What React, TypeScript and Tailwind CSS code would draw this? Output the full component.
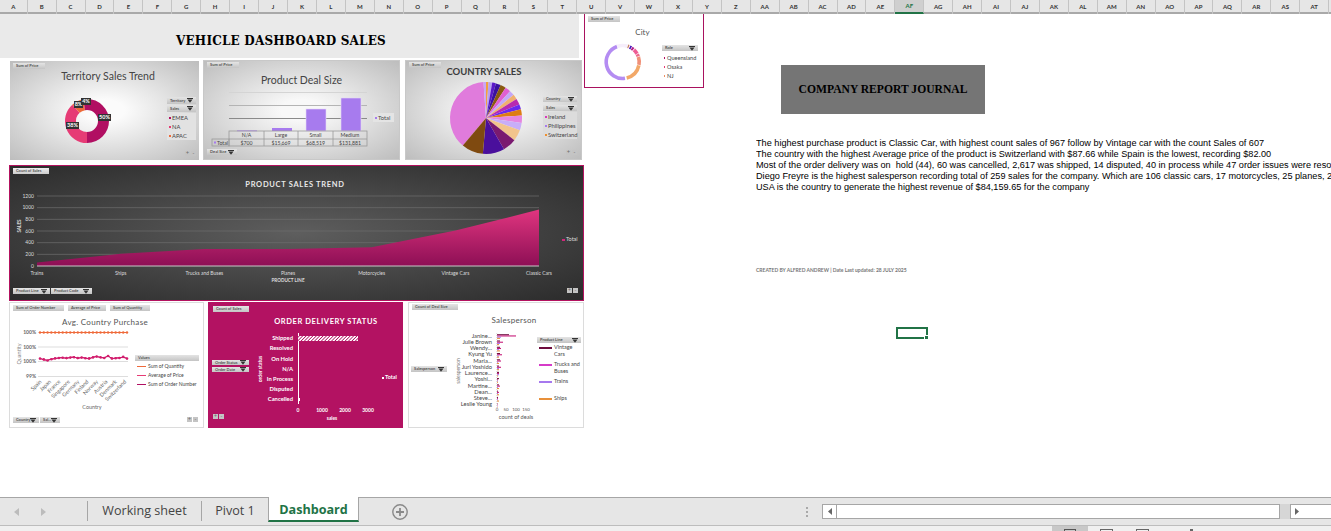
import React from "react";

const columns = [..."ABCDEFGHIJKLMNOPQRSTUVWXYZ", ..."ABCDEFGHIJKLMNOPQRST".split("").map((c) => "A" + c)];

function polar(cx: number, cy: number, r: number, deg: number) {
  const a = ((deg - 90) * Math.PI) / 180;
  return [cx + r * Math.cos(a), cy + r * Math.sin(a)];
}
function wedge(cx: number, cy: number, r: number, from: number, to: number) {
  const [x1, y1] = polar(cx, cy, r, from);
  const [x2, y2] = polar(cx, cy, r, to);
  return `M${cx} ${cy}L${x1} ${y1}A${r} ${r} 0 ${to - from > 180 ? 1 : 0} 1 ${x2} ${y2}Z`;
}
function arc(cx: number, cy: number, r: number, from: number, to: number) {
  const [x1, y1] = polar(cx, cy, r, from);
  const [x2, y2] = polar(cx, cy, r, to);
  return `M${x1} ${y1}A${r} ${r} 0 ${to - from > 180 ? 1 : 0} 1 ${x2} ${y2}`;
}

function Arrow() {
  return (
    <svg width="6" height="5" viewBox="0 0 6 5" className="shrink-0">
      <rect x="0" y="0" width="6" height="1" fill="#333" />
      <path d="M0.5 1.5H5.5L3 4.8Z" fill="#333" />
    </svg>
  );
}

function Field({ label, className, arrow }: { label: string; className: string; arrow?: boolean }) {
  return (
    <div
      className={`flex items-center justify-between overflow-hidden whitespace-nowrap bg-gradient-to-b from-[#e4e4e4] to-[#c4c4c4] px-[3px] text-[4px] font-bold leading-none text-[#555] ${className}`}
    >
      <span>{label}</span>
      {arrow && <Arrow />}
    </div>
  );
}

function PlusMinus({ className = "" }: { className?: string }) {
  return (
    <div className={`flex gap-[1px] ${className}`}>
      <div className="flex h-[5px] w-[5px] items-center justify-center bg-[#c4c4c4] text-[5px] leading-none text-[#666]">+</div>
      <div className="flex h-[5px] w-[5px] items-center justify-center bg-[#c4c4c4] text-[5px] leading-none text-[#666]">-</div>
    </div>
  );
}

function LegendRow({ color, label }: { color: string; label: string }) {
  return (
    <div className="flex h-[9px] items-center gap-[1px] whitespace-nowrap text-[5.8px] leading-none text-[#444]">
      <span className={`h-[2px] w-[2px] shrink-0 ${color}`} />
      <span>{label}</span>
    </div>
  );
}

function ColumnHeader() {
  return (
    <div className="flex h-[14px] shrink-0 border-b-2 border-[#a9a9a9] bg-[#e6e6e6]">
      {columns.map((c, i) => (
        <div
          key={c}
          className={`flex h-[14px] shrink-0 items-center justify-center border-r border-[#c4c4c4] text-[6px] font-bold leading-none ${
            i === 0 ? "w-[27.7px]" : "w-[28.93px]"
          } ${c === "AF" ? "border-b-2 border-b-[#217346] bg-[#cfcfcf] text-[#217346]" : "text-[#333]"}`}
        >
          {c}
        </div>
      ))}
    </div>
  );
}

function TerritoryCard() {
  return (
    <div className="flex h-[99px] w-[189px] flex-col self-end bg-[radial-gradient(ellipse_at_center,#fbfbfb_15%,#bdbdbd_100%)]">
      <Field label="Sum of Price" className="ml-[3px] mt-[2px] h-[6px] w-[32px] shrink-0" />
      <div className="flex h-[14px] shrink-0 items-center justify-center pl-[7px] text-[10.5px] leading-none text-[#444]">
        Territory Sales Trend
      </div>
      <div className="flex flex-1">
        <svg width="150" height="77" viewBox="10 83 150 77" className="shrink-0">
          <path d={arc(87, 121, 16.5, 0, 180)} fill="none" stroke="#b10f62" strokeWidth="11" />
          <path d={arc(87, 121, 16.5, 180, 318)} fill="none" stroke="#e63b75" strokeWidth="11" />
          <path d={arc(87, 121, 16.5, 318, 350)} fill="none" stroke="#ee6a3a" strokeWidth="11" />
          <path d={arc(87, 121, 16.5, 350, 360)} fill="none" stroke="#b10f62" strokeWidth="11" />
          {[
            [74, 101, "8%", 9],
            [81, 98, "4%", 10],
            [98, 114, "50%", 13],
            [66, 122, "38%", 13],
          ].map(([x, y, t, w]) => (
            <g key={String(t)}>
              <rect x={x as number} y={y as number} width={w as number} height="7" fill="#333" />
              <text x={(x as number) + (w as number) / 2} y={(y as number) + 5.3} fontSize="5.5" fontWeight="700" fill="#fff" textAnchor="middle">
                {t}
              </text>
            </g>
          ))}
        </svg>
        <div className="ml-[7px] mt-[14px] flex w-[29px] flex-col gap-[1px] pb-[4px]">
          <Field label="Territory" className="h-[7px] w-full" arrow />
          <Field label="Sales" className="h-[7px] w-full" arrow />
          <div className="bg-[#e2e2e2] px-[2px]">
            <LegendRow color="bg-[#b10f62]" label="EMEA" />
            <LegendRow color="bg-[#e63b75]" label="NA" />
            <LegendRow color="bg-[#ee6a3a]" label="APAC" />
          </div>
          <PlusMinus className="mt-auto justify-end" />
        </div>
      </div>
    </div>
  );
}

function DealCard() {
  const cols = [229, 264, 298, 333, 367];
  const cells = [
    ["N/A", "$700"],
    ["Large", "$15,669"],
    ["Small", "$68,519"],
    ["Medium", "$131,881"],
  ];
  return (
    <div className="flex h-[100px] w-[197px] flex-col border border-[#c8c8c8] bg-[radial-gradient(ellipse_at_center,#f8f8f8_15%,#bdbdbd_100%)]">
      <Field label="Sum of Price" className="ml-[3px] mt-[1px] h-[6px] w-[32px] shrink-0" />
      <div className="mt-[6px] flex h-[12px] shrink-0 items-center justify-center text-[10.5px] leading-none text-[#444]">
        Product Deal Size
      </div>
      <div className="flex h-[62px] shrink-0">
        <svg width="164" height="62" viewBox="208 86 164 62" className="ml-[4px] shrink-0">
          <line x1="229" x2="367" y1="92.5" y2="92.5" stroke="#d4d4d4" />
          <line x1="229" x2="367" y1="105.5" y2="105.5" stroke="#b4b4b4" />
          <line x1="229" x2="367" y1="118.5" y2="118.5" stroke="#8a8a8a" />
          <rect x="237" y="130.4" width="20" height="0.8" fill="#a77bee" />
          <rect x="272" y="128" width="20" height="3" fill="#a77bee" />
          <rect x="306" y="109" width="20" height="22" fill="#a77bee" stroke="#e3d8f7" strokeWidth="0.6" />
          <rect x="341" y="98" width="20" height="33" fill="#a77bee" stroke="#e3d8f7" strokeWidth="0.6" />
          <g fill="none" stroke="#9a9a9a" strokeWidth="0.8">
            <rect x="229" y="131" width="138" height="15" />
            <rect x="212" y="139" width="17" height="7" />
            <line x1="229" x2="367" y1="139" y2="139" />
            {cols.slice(1, 4).map((x) => (
              <line key={x} x1={x} x2={x} y1="131" y2="146" />
            ))}
          </g>
          <rect x="214" y="141.5" width="2" height="2" fill="#a77bee" />
          <text x="217" y="144.5" fontSize="5.2" fill="#444">Total</text>
          {cells.map(([a, b], i) => (
            <g key={a} fontSize="5.2" fill="#444" textAnchor="middle">
              <text x={(cols[i] + cols[i + 1]) / 2} y="137">{a}</text>
              <text x={(cols[i] + cols[i + 1]) / 2} y="144.5">{b}</text>
            </g>
          ))}
        </svg>
        <div className="ml-[1px] mt-[27px] h-[9px] w-[21px] bg-[#e4e4e4] px-[2px]">
          <LegendRow color="bg-[#a77bee]" label="Total" />
        </div>
      </div>
      <Field label="Deal Size" className="ml-[3px] mt-[1px] h-[6px] w-[30px] shrink-0" arrow />
    </div>
  );
}

function CountryCard() {
  const slices: [number, number, string][] = [
    [220, 356, "#e07bdc"],
    [356, 360, "#c9a7f5"],
    [0, 4, "#f0a040"],
    [4, 10, "#b9a0f0"],
    [10, 16, "#5a18c8"],
    [16, 24, "#3b10a0"],
    [24, 33, "#8a5a10"],
    [33, 42, "#e060d0"],
    [42, 50, "#c4a8f7"],
    [50, 58, "#f0b070"],
    [58, 68, "#b82ab0"],
    [68, 76, "#6a28ee"],
    [76, 86, "#de7c14"],
    [86, 98, "#e585e0"],
    [98, 110, "#c8aef8"],
    [110, 128, "#f2c48c"],
    [128, 150, "#7a1a70"],
    [150, 185, "#4a0f9c"],
    [185, 220, "#7f4a10"],
  ];
  return (
    <div className="flex h-[100px] w-[177px] flex-col border border-[#c8c8c8] bg-[radial-gradient(ellipse_at_center,#f8f8f8_15%,#bdbdbd_100%)]">
      <Field label="Sum of Price" className="ml-[3px] mt-[1px] h-[6px] w-[32px] shrink-0" />
      <div className="-mt-[2px] flex h-[11px] shrink-0 items-center justify-center pr-[19px] text-[9.5px] font-bold leading-none text-[#3c3c3c]">
        COUNTRY SALES
      </div>
      <div className="mt-[1px] flex flex-1">
        <svg width="135" height="79" viewBox="406 78 135 79" className="shrink-0">
          {slices.map(([a, b, c]) => (
            <path key={a} d={wedge(486, 118, 36, a, b)} fill={c} />
          ))}
        </svg>
        <div className="ml-[2px] mt-[18px] flex w-[34px] flex-col gap-[1px] pb-[4px]">
          <Field label="Country" className="h-[6px] w-full" arrow />
          <div className="h-[1px]" />
          <Field label="Sales" className="h-[6px] w-full" arrow />
          <div className="bg-[#dcdcdc] px-[2px]">
            <LegendRow color="bg-[#d838c0]" label="Ireland" />
            <LegendRow color="bg-[#a77bee]" label="Philippines" />
            <LegendRow color="bg-[#ee8f30]" label="Switzerland" />
          </div>
          <PlusMinus className="mt-auto justify-end" />
        </div>
      </div>
    </div>
  );
}

function CityCard() {
  const segs: [number, number, string][] = [
    [172, 340, "#b48cf2"],
    [340, 378, "#f6eefb"],
    [18, 22, "#c47a5a"],
    [25, 31, "#4a18b8"],
    [33, 40, "#b01a88"],
    [43, 60, "#ee5c94"],
    [62, 70, "#ee6a8a"],
    [72, 100, "#f09078"],
    [102, 166, "#f2a868"],
  ];
  return (
    <div className="flex h-[74px] w-[120px] shrink-0 flex-col border-x border-b border-[#a9125f] bg-white">
      <Field label="Sum of Price" className="ml-[3px] mt-[2px] h-[6px] w-[32px] shrink-0" />
      <div className="mt-[5px] flex h-[10px] shrink-0 items-center justify-center pr-[3px] text-[8px] leading-none text-[#555]">City</div>
      <div className="flex flex-1">
        <svg width="75" height="50" viewBox="585 37 75 50" className="shrink-0">
          {segs.map(([a, b, c]) => (
            <path key={a} d={arc(622.7, 62, 16.5, a, b)} fill="none" stroke={c} strokeWidth="3.6" />
          ))}
        </svg>
        <div className="ml-[2px] mt-[8px] flex w-[36px] flex-col">
          <Field label="Role" className="h-[6px] w-full" arrow />
          <div className="mt-[2px] pl-[2px]">
            <div className="flex h-[9px] items-center gap-[2px] text-[5.6px] leading-none text-[#444]"><span className="h-[2px] w-[1px] bg-[#b10f62]" />Queensland</div>
            <div className="flex h-[9px] items-center gap-[2px] text-[5.6px] leading-none text-[#444]"><span className="h-[2px] w-[1px] bg-[#e63b75]" />Osaka</div>
            <div className="flex h-[9px] items-center gap-[2px] text-[5.6px] leading-none text-[#444]"><span className="h-[2px] w-[1px] bg-[#ee8f60]" />NJ</div>
          </div>
        </div>
      </div>
    </div>
  );
}

function TrendCard() {
  const xs = [37, 120.7, 204.4, 288, 371.7, 455.4, 539];
  const vals = [58, 208, 290, 290, 323, 607, 967];
  const names = ["Trains", "Ships", "Trucks and Buses", "Planes", "Motorcycles", "Vintage Cars", "Classic Cars"];
  const y = (v: number) => 266 - (v * 70) / 1200;
  const area = `M37 266 ${xs.map((x, i) => `L${x} ${y(vals[i])}`).join(" ")} L539 266Z`;
  return (
    <div className="ml-[9px] mt-[5px] flex h-[136px] w-[575px] flex-col border border-[#b3125f] bg-[radial-gradient(ellipse_at_center,#5e5e5e_0%,#2b2b2b_100%)]">
      <Field label="Count of Sales" className="ml-[3px] mt-[2px] h-[6px] w-[36px] shrink-0 from-[#eeeeee] to-[#cccccc]" />
      <div className="mt-[5px] flex h-[12px] shrink-0 items-center justify-center pr-[3px] text-[7.5px] font-bold leading-none tracking-[0.7px] text-[#e8e8e8]">
        PRODUCT SALES TREND
      </div>
      <div className="flex h-[94px] shrink-0">
        <svg width="550" height="94" viewBox="10 191 550 94" className="shrink-0">
          <defs>
            <linearGradient id="trendFill" x1="0" y1="0" x2="0" y2="1">
              <stop offset="0" stopColor="#e0357f" />
              <stop offset="1" stopColor="#8d0f55" />
            </linearGradient>
          </defs>
          {[200, 400, 600, 800, 1000, 1200].map((v) => (
            <line key={v} x1="37" x2="539" y1={y(v)} y2={y(v)} stroke="#6e6e6e" strokeWidth="0.7" />
          ))}
          <path d={area} fill="url(#trendFill)" />
          <line x1="37" x2="539" y1="266" y2="266" stroke="#c8c8c8" />
          {[0, 200, 400, 600, 800, 1000, 1200].map((v) => (
            <text key={v} x="34" y={y(v) + 1.8} fontSize="5" fill="#ddd" textAnchor="end">{v}</text>
          ))}
          {names.map((n, i) => (
            <text key={n} x={xs[i]} y="274.5" fontSize="5" fill="#ddd" textAnchor="middle">{n}</text>
          ))}
          <text x="288" y="282" fontSize="4.6" fontWeight="700" fill="#ddd" textAnchor="middle">PRODUCT LINE</text>
          <text x="0" y="0" fontSize="4.6" fontWeight="700" fill="#ddd" textAnchor="middle" transform="translate(21 226) rotate(-90)">SALES</text>
        </svg>
        <div className="ml-[2px] mt-[46px] flex h-[6px] items-center gap-[1px] text-[5.5px] leading-none text-[#ddd]">
          <span className="h-[2px] w-[3px] bg-[#d0287a]" />Total
        </div>
      </div>
      <div className="mt-[3px] flex shrink-0 items-start gap-[1px] pl-[3px] pr-[5px]">
        <Field label="Product Line" className="h-[6px] w-[37px] from-[#dddddd] to-[#bbbbbb]" arrow />
        <Field label="Product Code" className="h-[6px] w-[41px] from-[#dddddd] to-[#bbbbbb]" arrow />
        <PlusMinus className="ml-auto" />
      </div>
    </div>
  );
}

function AvgCard() {
  const pts1 = [358.6, 359.4, 360.5, 359.2, 358.3, 358, 357.8, 358, 357.6, 357.2, 358, 357.6, 358.3, 358.4, 357.4, 356.6, 357.2, 358, 356, 358.4, 358.2, 358, 356.8, 358.6];
  const pts2 = pts1.map((v, i) => v + (i % 3 === 1 ? 0.8 : -0.4));
  const xAt = (i: number) => 40 + (i * 87) / 23;
  const line = (p: number[]) => p.map((v, i) => `${i ? "L" : "M"}${xAt(i)} ${v}`).join(" ");
  const labels = ["Spain", "Japan", "France", "Singapore", "Germany", "Finland", "Norway", "Austria", "Denmark", "Switzerland"];
  const grid: [number, string][] = [
    [332.5, "100%"],
    [347, "100%"],
    [361.5, "100%"],
    [376.5, "99%"],
  ];
  return (
    <div className="flex h-[126px] w-[195px] shrink-0 flex-col border border-[#dcdcdc] bg-white">
      <div className="ml-[3px] mt-[2px] flex gap-[4px]">
        <Field label="Sum of Order Number" className="h-[6px] w-[51px]" />
        <Field label="Average of Price" className="h-[6px] w-[38px]" />
        <Field label="Sum of Quantity" className="h-[6px] w-[40px]" />
      </div>
      <div className="mt-[5px] flex h-[11px] shrink-0 items-center justify-center pr-[3px] text-[8px] leading-none tracking-[0.3px] text-[#555]">
        Avg. Country Purchase
      </div>
      <div className="flex h-[88px] shrink-0">
        <svg width="123" height="88" viewBox="10 327 123 88" className="shrink-0">
          {grid.map(([v, t]) => (
            <g key={v}>
              <line x1="38" x2="128" y1={v} y2={v} stroke="#d4d4d4" strokeWidth="0.8" />
              <text x="36" y={v + 1.8} fontSize="5" fontWeight="700" fill="#666" textAnchor="end">{t}</text>
            </g>
          ))}
          <path d="M40 332.5H127" stroke="#ef6a3a" strokeWidth="1" />
          {pts1.map((_, i) => (
            <circle key={i} cx={xAt(i)} cy="332.5" r="1.2" fill="#ef6a3a" />
          ))}
          <path d={line(pts2)} fill="none" stroke="#e63b75" strokeWidth="1" />
          <path d={line(pts1)} fill="none" stroke="#c0146a" strokeWidth="1" />
          {pts1.map((v, i) => (
            <circle key={i} cx={xAt(i)} cy={v} r="1.3" fill="#d31c6d" />
          ))}
          {labels.map((l, i) => (
            <text key={l} x="0" y="0" fontSize="5.4" fill="#666" textAnchor="end" transform={`translate(${42 + i * 9.4} 382) rotate(-45)`}>
              {l}
            </text>
          ))}
          <text x="92" y="409" fontSize="5.4" fill="#666" textAnchor="middle">Country</text>
          <text x="0" y="0" fontSize="5.4" fill="#888" textAnchor="middle" transform="translate(21 354) rotate(-90)">Quantity</text>
        </svg>
        <div className="ml-[2px] mt-[28px] flex w-[64px] flex-col">
          <Field label="Values" className="h-[6px] w-full" />
          <div className="mt-[1px]">
            {[
              ["bg-[#ef6a3a]", "Sum of Quantity"],
              ["bg-[#e63b75]", "Average of Price"],
              ["bg-[#b10f62]", "Sum of Order Number"],
            ].map(([c, t]) => (
              <div key={t} className="flex h-[9px] items-center gap-[2px] whitespace-nowrap text-[5px] leading-none text-[#444]">
                <span className={`ml-[2px] h-[1px] w-[9px] ${c}`} />
                {t}
              </div>
            ))}
          </div>
        </div>
      </div>
      <div className="mt-[2px] flex items-start gap-[1px] pl-[3px] pr-[5px]">
        <Field label="Country" className="h-[6px] w-[26px]" arrow />
        <Field label="Sal..." className="h-[6px] w-[20px]" arrow />
        <PlusMinus className="ml-auto" />
      </div>
    </div>
  );
}

function OrderCard() {
  const status: [string, number][] = [
    ["Shipped", 338],
    ["Resolved", 348],
    ["On Hold", 359],
    ["N/A", 369],
    ["In Process", 379],
    ["Disputed", 389],
    ["Cancelled", 399],
  ];
  return (
    <div className="flex h-[126px] w-[195px] shrink-0 flex-col bg-[#b31262]">
      <Field label="Count of Sales" className="ml-[5px] mt-[4px] h-[6px] w-[36px] shrink-0" />
      <div className="mt-[4px] flex h-[12px] shrink-0 items-center justify-center pl-[41px] text-[7.5px] font-bold leading-none tracking-[0.6px] text-white">
        ORDER DELIVERY STATUS
      </div>
      <div className="flex h-[96px] shrink-0">
        <div className="ml-[4px] mt-[32px] flex w-[37px] shrink-0 flex-col gap-[2px] pb-[5px]">
          <Field label="Order Status" className="h-[5px] w-full shrink-0" arrow />
          <Field label="Order Date" className="h-[5px] w-full shrink-0" arrow />
          <PlusMinus className="ml-[1px] mt-auto" />
        </div>
        <svg width="128" height="96" viewBox="249 328 128 96" className="shrink-0">
          <defs>
            <pattern id="hatch" width="2.4" height="2.4" patternUnits="userSpaceOnUse" patternTransform="rotate(45)">
              <rect width="2.4" height="2.4" fill="#ffffff" />
              <rect width="0.8" height="2.4" fill="#b31262" />
            </pattern>
          </defs>
          {status.map(([s, y]) => (
            <text key={s} x="293" y={y + 2} fontSize="5.8" fontWeight="700" fill="#fff" textAnchor="end">{s}</text>
          ))}
          <line x1="298.5" x2="298.5" y1="333" y2="404" stroke="#fff" strokeWidth="1" />
          <rect x="298" y="336" width="60" height="5" fill="url(#hatch)" />
          <rect x="298" y="398" width="2" height="3" fill="#fff" />
          {[
            ["0", 298],
            ["1000", 322],
            ["2000", 345],
            ["3000", 368],
          ].map(([t, x]) => (
            <text key={t} x={x} y="412" fontSize="5" fontWeight="700" fill="#fff" textAnchor="middle">{t}</text>
          ))}
          <text x="332" y="420" fontSize="4.8" fontWeight="700" fill="#fff" textAnchor="middle">sales</text>
          <text x="0" y="0" fontSize="5" fontWeight="700" fill="#fff" textAnchor="middle" transform="translate(262 369) rotate(-90)">order status</text>
        </svg>
        <div className="ml-[5px] mt-[47px] flex h-[6px] items-center gap-[1px] text-[5.5px] font-bold leading-none text-white">
          <span className="h-[2px] w-[2px] bg-white" />Total
        </div>
      </div>
    </div>
  );
}

function SalesCard() {
  const names = ["Janine...", "Julie Brown", "Wendy...", "Kyung Yu", "Maria...", "Juri Yoshido", "Laurence...", "Yoshi...", "Martine...", "Dean...", "Steve...", "Leslie Young"];
  const bars = [
    [12, 19, 4, 3],
    [3, 6, 3, 2],
    [3, 4, 2, 3],
    [3, 5, 2, 2],
    [3, 4, 1, 2],
    [2, 4, 2, 2],
    [2, 2, 2, 1],
    [2, 1, 1, 1],
    [2, 3, 1, 2],
    [1, 2, 1, 2],
    [1, 1, 1, 2],
    [0.5, 0.5, 0.5, 0.5],
  ];
  const cols = ["#6d0b3d", "#c71c7a", "#a77bee", "#e8903a"];
  return (
    <div className="flex h-[126px] w-[176px] shrink-0 flex-col border border-[#dcdcdc] bg-white">
      <Field label="Count of Deal Size" className="ml-[3px] mt-[1px] h-[6px] w-[46px] shrink-0" />
      <div className="mt-[4px] flex h-[12px] shrink-0 items-center justify-center pl-[36px] text-[8px] leading-none tracking-[0.3px] text-[#555]">
        Salesperson
      </div>
      <div className="flex h-[96px] shrink-0">
        <Field label="Salesperson" className="ml-[2px] mt-[40px] h-[6px] w-[36px] shrink-0" arrow />
        <svg width="86" height="96" viewBox="449 326 86 96" className="ml-[2px] shrink-0">
          {names.map((n, i) => (
            <text key={n} x="492" y={337.5 + i * 6.27} fontSize="5.8" fill="#444" textAnchor="end">{n}</text>
          ))}
          {bars.map((row, i) =>
            row.map((w, j) => (
              <rect key={j} x="497" y={334.2 + i * 6.27 + j * 1.2} width={w} height="1.1" fill={cols[j]} />
            ))
          )}
          <line x1="496.7" x2="496.7" y1="333" y2="408" stroke="#bbb" strokeWidth="0.5" strokeDasharray="1 1" />
          {[
            ["0", 497],
            ["50", 506],
            ["100", 516],
            ["150", 526],
          ].map(([t, x]) => (
            <text key={t} x={x} y="411" fontSize="4.4" fill="#555" textAnchor="middle">{t}</text>
          ))}
          <text x="516" y="419" fontSize="5.6" fill="#555" textAnchor="middle">count of deals</text>
          <text x="0" y="0" fontSize="5" fill="#777" textAnchor="middle" transform="translate(460 371) rotate(-90)">salesperson</text>
        </svg>
        <div className="ml-[2px] mt-[11px] flex w-[44px] flex-col">
          <Field label="Product Line" className="h-[6px] w-full shrink-0" arrow />
          {[
            ["bg-[#6d0b3d]", "Vintage Cars"],
            ["bg-[#d63bc8]", "Trucks and Buses"],
            ["bg-[#a678ee]", "Trains"],
            ["bg-[#e8903a]", "Ships"],
          ].map(([c, t]) => (
            <div key={t} className="mt-[1px] flex h-[16px] gap-[2px] pl-[2px] text-[5.5px] leading-[7px] text-[#444]">
              <span className={`mt-[3px] h-[2px] w-[13px] shrink-0 ${c}`} />
              <span className="w-[26px]">{t}</span>
            </div>
          ))}
        </div>
      </div>
    </div>
  );
}

function Journal() {
  const lines = [
    "The highest purchase product is Classic Car, with highest count sales of 967 follow by Vintage car with the count Sales of 607",
    "The country with the highest Average price of the product is Switzerland with $87.66 while Spain is the lowest, recording $82.00",
    "Most of the order delivery was on  hold (44), 60 was cancelled, 2,617 was shipped, 14 disputed, 40 in process while 47 order issues were resolved",
    "Diego Freyre is the highest salesperson recording total of 259 sales for the company. Which are 106 classic cars, 17 motorcycles, 25 planes, 23 ships",
    "USA is the country to generate the highest revenue of $84,159.65 for the company",
  ];
  return (
    <div className="flex min-w-0 flex-1 flex-col">
      <div className="ml-[77px] mt-[51px] flex h-[49px] w-[204px] items-center justify-center bg-[#757575] font-['Liberation_Serif',serif] text-[11.6px] font-bold leading-none text-black">
        COMPANY REPORT JOURNAL
      </div>
      <div className="ml-[52px] mt-[23px] origin-left scale-x-[0.953] font-['Liberation_Sans',sans-serif] text-[9.6px] leading-[11px] text-black">
        {lines.map((l) => (
          <div key={l} className="h-[11px] whitespace-pre">{l}</div>
        ))}
      </div>
      <div className="ml-[52px] mt-[75px] whitespace-nowrap text-[5px] font-bold leading-[6px] text-[#777]">
        CREATED BY ALFRED ANDREW | Date Last updated: 28 JULY 2025
      </div>
    </div>
  );
}

function TabBar() {
  return (
    <div className="flex h-[29px] shrink-0 border-y border-t-[#a6a6a6] border-b-[#bdbdbd] bg-[#e6e6e6] font-['Open_Sans',sans-serif] text-[12.6px] leading-none text-[#444]">
      <div className="flex h-[27px] w-[87px] shrink-0 items-center gap-[22px] pl-[14px]">
        <svg width="5" height="8" viewBox="0 0 5 8"><path d="M5 0V8L0 4Z" fill="#bcbcbc" /></svg>
        <svg width="5" height="8" viewBox="0 0 5 8"><path d="M0 0V8L5 4Z" fill="#bcbcbc" /></svg>
      </div>
      <div className="mt-[3px] flex h-[20px] w-[114px] shrink-0 items-center justify-center border-l border-[#a6a6a6]">Working sheet</div>
      <div className="mt-[3px] flex h-[20px] w-[67px] shrink-0 items-center justify-center border-l border-[#a6a6a6]">Pivot 1</div>
      <div className="-mt-px flex h-[25px] w-[91px] shrink-0 items-center justify-center border-x border-b-2 border-x-[#a6a6a6] border-b-[#217346] bg-white pt-[4px] font-bold text-[#217346]">
        Dashboard
      </div>
      <div className="ml-[32px] flex h-[27px] items-center">
        <svg width="18" height="18" viewBox="0 0 18 18" fill="none" stroke="#8a8a8a" strokeWidth="1.4">
          <circle cx="9" cy="9" r="7.2" />
          <path d="M9 5V13M5 9H13" strokeWidth="1.8" />
        </svg>
      </div>
      <div className="ml-[397px] flex h-[27px] flex-col items-center justify-center gap-[2px]">
        <span className="h-[2px] w-[2px] bg-[#a9a9a9]" />
        <span className="h-[2px] w-[2px] bg-[#a9a9a9]" />
        <span className="h-[2px] w-[2px] bg-[#a9a9a9]" />
      </div>
      <div className="ml-[14px] mt-[6px] flex h-[15px] w-[458px] shrink-0 border border-[#a6a6a6] bg-white">
        <div className="flex h-full w-[14px] items-center justify-center border-r border-[#a6a6a6]">
          <svg width="4" height="7" viewBox="0 0 4 7"><path d="M4 0V7L0 3.5Z" fill="#666" /></svg>
        </div>
      </div>
      <div className="mt-[6px] h-[15px] w-[10px] shrink-0 bg-[#d6d6d6]" />
      <div className="mt-[6px] flex h-[15px] flex-1 items-center border-y border-l border-[#a6a6a6] bg-white pl-[4px]">
        <svg width="4" height="7" viewBox="0 0 4 7"><path d="M0 0V7L4 3.5Z" fill="#666" /></svg>
      </div>
    </div>
  );
}

function StatusBar() {
  return (
    <div className="flex h-[5px] shrink-0 bg-[#f0f0f0] pl-[1052px]">
      <div className="flex h-full w-[36px] justify-center bg-[#c8c8c8] pt-[3px]">
        <div className="h-[2px] w-[12px] border-x border-t border-[#555]" />
      </div>
      <div className="ml-[12px] mt-[3px] h-[2px] w-[13px] border-x border-t border-[#666]" />
      <div className="ml-[23px] mt-[3px] h-[2px] w-[13px] border-x border-t border-[#666]" />
      <div className="ml-[41px] mt-[3px] h-[2px] w-[3px] bg-[#666]" />
    </div>
  );
}

export default function App() {
  return (
    <div className="relative flex h-[531px] w-[1331px] flex-col overflow-hidden bg-white font-['Lato',sans-serif]">
      <ColumnHeader />
      <div className="flex h-[483px] shrink-0">
        <div className="flex w-[584px] shrink-0 flex-col">
          <div className="flex h-[44px] w-[579px] shrink-0 items-center bg-[#eaeaea] pl-[176px] pt-[10px] font-['DejaVu_Serif',serif] text-[12px] font-bold leading-none tracking-[0.2px] text-black">
            VEHICLE DASHBOARD SALES
          </div>
          <div className="ml-[10px] mt-[2px] flex h-[100px] shrink-0">
            <TerritoryCard />
            <div className="ml-[4px]"><DealCard /></div>
            <div className="ml-[5px]"><CountryCard /></div>
          </div>
          <TrendCard />
          <div className="ml-[9px] mt-[1px] flex">
            <AvgCard />
            <div className="ml-[4px]"><OrderCard /></div>
            <div className="ml-[5px]"><SalesCard /></div>
          </div>
        </div>
        <CityCard />
        <Journal />
      </div>
      <TabBar />
      <StatusBar />
      <div className="absolute left-[896px] top-[327px] h-[12px] w-[32px] border-2 border-[#217346]">
        <div className="absolute -bottom-[3px] -right-[3px] h-[5px] w-[5px] border border-white bg-[#217346]" />
      </div>
    </div>
  );
}
